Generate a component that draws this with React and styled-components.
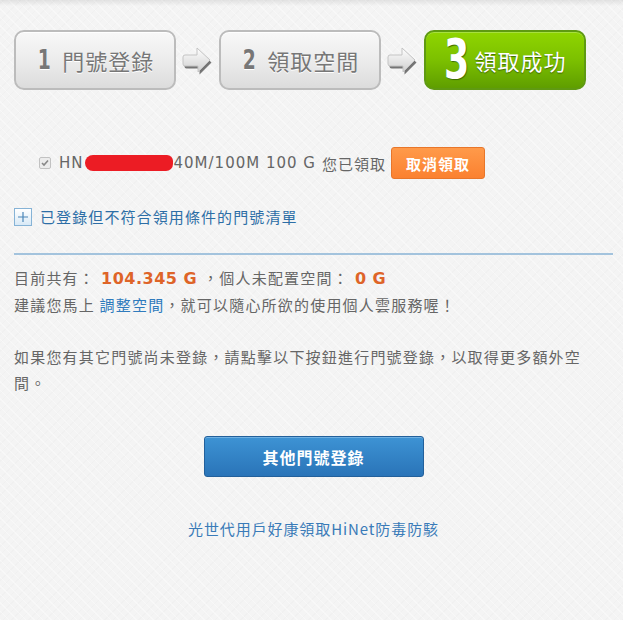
import React from "react";
import styled, { createGlobalStyle } from "styled-components";

const Global = createGlobalStyle`
  html, body { margin: 0; padding: 0; }
  body {
    background-color: #f4f4f4;
    background-image:
      repeating-linear-gradient(45deg, rgba(255,255,255,0.4) 0 1px, transparent 1px 6px),
      repeating-linear-gradient(-45deg, rgba(228,228,228,0.2) 0 1px, transparent 1px 6px);
    font-family: "DejaVu Sans", "Noto Sans CJK TC", sans-serif;
    color: #666;
  }
`;

const Page = styled.div`
  position: relative;
  min-height: 620px;
  padding: 30px 10px 0 14px;
  box-sizing: border-box;
  &::before {
    content: "";
    position: absolute;
    left: 0; right: 0; top: 0;
    height: 6px;
    background: linear-gradient(rgba(0,0,0,0.08), rgba(0,0,0,0));
  }
`;

const Steps = styled.div`
  display: flex;
  align-items: center;
  gap: 6px;
`;

const Step = styled.div`
  width: 162px;
  height: 60px;
  box-sizing: border-box;
  border-radius: 10px;
  border: 2px solid ${p => (p.$active ? "#5f9a12" : "#bcbcbc")};
  background: ${p =>
    p.$active
      ? "linear-gradient(#8fd500 0%, #7cc000 50%, #5f9e00 100%)"
      : "linear-gradient(#f8f8f8 0%, #ececec 50%, #dcdcdc 100%)"};
  box-shadow: inset 0 1px 0 ${p => (p.$active ? "#a8e040" : "#fff")};
  display: flex;
  align-items: center;
  justify-content: center;
  gap: ${p => (p.$active ? "4px" : "10px")};
  color: ${p => (p.$active ? "#fff" : "#777")};
  font-family: "Noto Sans CJK TC", sans-serif;
  font-size: 22px;
  letter-spacing: 1px;
  text-shadow: ${p => (p.$active ? "0 1px 1px #3d6a00" : "0 1px 0 #fff")};
`;

const StepNum = styled.span`
  font-family: "DejaVu Sans Condensed", "DejaVu Sans", sans-serif;
  font-weight: bold;
  font-size: 26px;
  letter-spacing: 0;
  display: inline-block;
  transform: scaleX(0.8);
`;

const BigNum = styled.span`
  font-family: "DejaVu Sans Condensed", "DejaVu Sans", sans-serif;
  font-weight: bold;
  font-size: 56px;
  line-height: 1;
  letter-spacing: 0;
  display: inline-block;
  transform: scaleX(0.72);
  margin: 0 -4px 2px -4px;
  text-shadow: 1px 1px 1px #3d6a00;
`;

const Arrow = () => (
  <svg width="31" height="32" viewBox="0 0 31 32">
    <defs>
      <linearGradient id="ag" x1="0" y1="0" x2="0" y2="1">
        <stop offset="0" stopColor="#ffffff" />
        <stop offset="1" stopColor="#cfcfcf" />
      </linearGradient>
    </defs>
    <path d="M3 12 H15 V5 L28 17 L16 29 V23 H3 Q1 23 1 21 V14 Q1 12 3 12 Z" fill="#555" transform="translate(1.5 1.5)" opacity="0.8" />
    <path d="M3 11 H15 V4 L28 16 L16 28 V22 H3 Q1 22 1 20 V13 Q1 11 3 11 Z" fill="url(#ag)" stroke="#c4c4c4" strokeWidth="1" />
  </svg>
);

const Content = styled.div`
  margin-top: 57px;
`;

const ClaimRow = styled.div`
  display: flex;
  align-items: center;
  padding-left: 25px;
  height: 32px;
  font-size: 15px;
  color: #666;
`;

const Check = styled.span`
  width: 10px;
  height: 10px;
  border: 1px solid #c2c2c2;
  border-radius: 2px;
  background: #ececec;
  display: inline-flex;
  align-items: center;
  justify-content: center;
  margin-right: 8px;
`;

const Redact = styled.span`
  display: inline-block;
  width: 88px;
  height: 16px;
  border-radius: 8px 6px 7px 8px;
  background: #ec1c24;
  margin: 0 1px 0 1px;
`;

const Label = styled.span`
  font-family: "DejaVu Sans", "Noto Sans CJK TC", sans-serif;
  letter-spacing: 1px;
`;

const Cjk = styled.span`
  font-family: "Noto Sans CJK TC", sans-serif;
  margin-left: 6px;
  letter-spacing: 1px;
`;

const OrangeBtn = styled.button`
  margin-left: 5px;
  height: 32px;
  width: 94px;
  border: 1px solid #e8762a;
  border-radius: 3px;
  background: linear-gradient(#ff9a4a, #fb8130);
  color: #fff;
  font-family: "Noto Sans CJK TC", sans-serif;
  font-weight: bold;
  font-size: 15px;
  letter-spacing: 1px;
  padding: 0;
`;

const ExpandRow = styled.div`
  display: flex;
  align-items: center;
  gap: 8px;
  margin-top: 27px;
  color: #2d6ea6;
  font-family: "Noto Sans CJK TC", sans-serif;
  font-size: 15px;
  letter-spacing: 1.1px;
`;

const PlusBox = styled.span`
  width: 16px;
  height: 16px;
  border: 1px solid #86b3d6;
  background: linear-gradient(#ffffff, #d8e9f6);
  display: inline-flex;
  align-items: center;
  justify-content: center;
`;

const Rule = styled.div`
  height: 2px;
  background: #a3c3dd;
  margin-top: 26px;
`;

const Info = styled.div`
  margin-top: 10px;
  font-family: "Noto Sans CJK TC", sans-serif;
  font-size: 15px;
  line-height: 26px;
  color: #666;
  letter-spacing: 1.2px;
`;

const Para = styled.p`
  margin: 0 0 ${p => p.$gap || 0}px 0;
  max-width: ${p => p.$max || "none"};
`;

const Amount = styled.b`
  font-family: "DejaVu Sans", sans-serif;
  color: #de6428;
  font-size: 16px;
  letter-spacing: 0.5px;
  margin: 0 6px;
`;

const Link = styled.a`
  color: #2f7bbd;
  text-decoration: none;
`;

const Center = styled.div`
  display: flex;
  flex-direction: column;
  align-items: center;
`;

const BlueBtn = styled.button`
  margin-top: 40px;
  width: 220px;
  height: 41px;
  border: 1px solid #22609b;
  border-radius: 3px;
  background: linear-gradient(#3d93d4, #2a74b8);
  box-shadow: inset 0 1px 0 #6fb0e2;
  color: #fff;
  font-family: "Noto Sans CJK TC", sans-serif;
  font-weight: bold;
  font-size: 16px;
  letter-spacing: 1px;
`;

const FootLink = styled.a`
  margin-top: 41px;
  color: #3a7bb8;
  font-family: "Noto Sans CJK TC", sans-serif;
  font-size: 15px;
  text-decoration: none;
  letter-spacing: 0.9px;
`;

export default function App() {
  return (
    <>
      <Global />
      <Page>
        <Steps>
          <Step>
            <StepNum>1</StepNum>門號登錄
          </Step>
          <Arrow />
          <Step>
            <StepNum>2</StepNum>領取空間
          </Step>
          <Arrow />
          <Step $active>
            <BigNum>3</BigNum>領取成功
          </Step>
        </Steps>
        <Content>
          <ClaimRow>
            <Check>
              <svg width="8" height="8" viewBox="0 0 8 8">
                <path d="M1 4 L3 6 L7 1.5" fill="none" stroke="#888" strokeWidth="1.6" />
              </svg>
            </Check>
            <Label>HN</Label>
            <Redact />
            <Label>40M/100M 100 G</Label>
            <Cjk>您已領取</Cjk>
            <OrangeBtn>取消領取</OrangeBtn>
          </ClaimRow>
          <ExpandRow>
            <PlusBox>
              <svg width="12" height="12" viewBox="0 0 12 12">
                <path d="M6 1 V11 M1 6 H11" stroke="#4a86b8" strokeWidth="1.2" />
              </svg>
            </PlusBox>
            已登錄但不符合領用條件的門號清單
          </ExpandRow>
          <Rule />
          <Info>
            <Para>
              目前共有：<Amount>104.345 G</Amount>，個人未配置空間：<Amount>0 G</Amount>
            </Para>
            <Para $gap={26}>
              建議您馬上 <Link href="#">調整空間</Link>，就可以隨心所欲的使用個人雲服務喔！
            </Para>
            <Para $max="580px">
              如果您有其它門號尚未登錄，請點擊以下按鈕進行門號登錄，以取得更多額外空間。
            </Para>
          </Info>
          <Center>
            <BlueBtn>其他門號登錄</BlueBtn>
            <FootLink href="#">光世代用戶好康領取HiNet防毒防駭</FootLink>
          </Center>
        </Content>
      </Page>
    </>
  );
}
